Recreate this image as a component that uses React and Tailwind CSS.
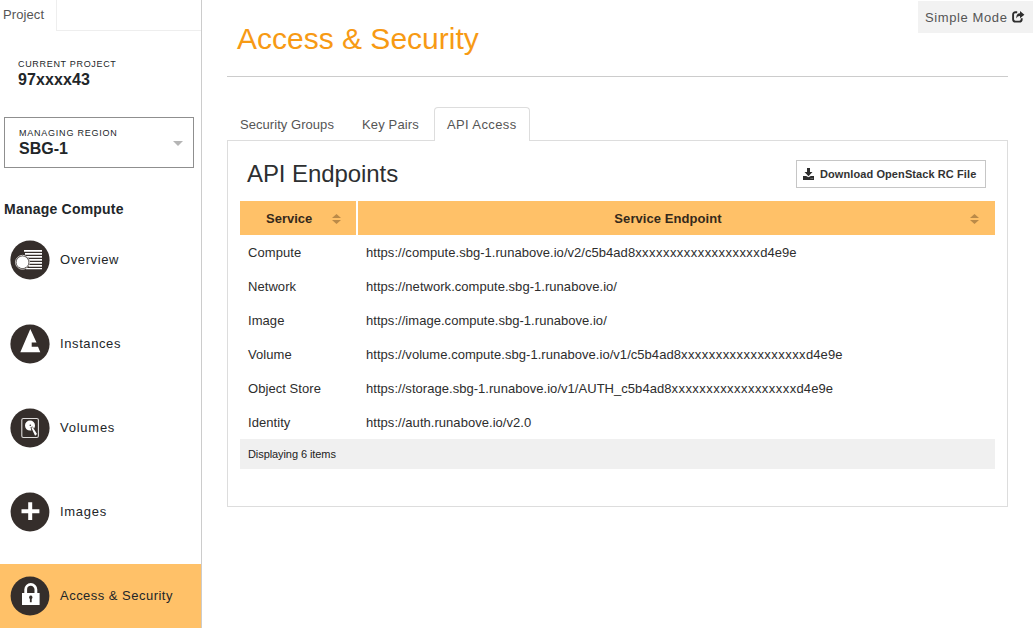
import React from "react";

const OverviewIcon = () => (
  <svg width="40" height="40" viewBox="0 0 40 40">
    <circle cx="20" cy="20" r="19.6" fill="#352e2b" />
    <g fill="#fff">
      <path d="M14 10h18v1.700H14ZM15 13h17v1.700H15ZM16 16h16v1.700H16ZM18 19h14v1.700H18ZM19 22h13v1.700H19ZM19 25h13v1.700H19ZM16 28h16v1.300H16Z" />
    </g>
    <circle cx="12.500" cy="22.300" r="7" fill="#352e2b" stroke="#c9c6c4" strokeWidth="1" />
    <circle cx="12.500" cy="22.300" r="6" fill="#fff" />
  </svg>
);

const InstancesIcon = () => (
  <svg width="40" height="40" viewBox="0 0 40 40">
    <circle cx="20" cy="20" r="19.6" fill="#352e2b" />
    <path d="M20.3 5L26.500 18.500H21.700V22.700H28L30.3 28.3H10.3Z" fill="#fff" />
  </svg>
);

const VolumesIcon = () => (
  <svg width="40" height="40" viewBox="0 0 40 40">
    <circle cx="20" cy="20" r="19.6" fill="#352e2b" />
    <rect x="11.8" y="10.5" width="16.6" height="19" rx="1.6" fill="none" stroke="#dedcdb" strokeWidth="1.1" />
    <path d="M20 12.600a5 5 0 0 1 5 5q0 1.600-.9 2.800l-1.700-1.900-1.900.7.900 3.300-1.400.1a5 5 0 0 1 0-10Z" fill="#fff" />
    <path d="M21.200 19.500l1.600-.3 4.200 6.700-1.900 1.900Z" fill="#fff" />
    <circle cx="20.300" cy="17.300" r="0.800" fill="#352e2b" />
  </svg>
);

const ImagesIcon = () => (
  <svg width="40" height="40" viewBox="0 0 40 40">
    <circle cx="20" cy="20" r="19.4" fill="#352e2b" />
    <path d="M18.2 10.3h4v7h7.2v4h-7.2V28h-4v-6.7h-6.7v-4h6.7Z" fill="#fff" />
  </svg>
);

const LockIcon = () => (
  <svg width="40" height="40" viewBox="0 0 40 40">
    <circle cx="20" cy="20" r="19.4" fill="#352e2b" />
    <path d="M15.700 18v-4.500a5.100 5.100 0 0 1 10.200 0v4.500" fill="none" stroke="#fff" strokeWidth="2.800" />
    <rect x="12" y="17" width="17.600" height="12" fill="#fff" />
    <path d="M20.800 19.600a1.800 1.800 0 0 1 .9 3.300v3.400h-1.800V22.900a1.800 1.800 0 0 1 .9-3.300Z" fill="#352e2b" />
  </svg>
);

const ShareIcon = () => (
  <svg width="13" height="12" viewBox="0 0 13 12">
    <path d="M5.200 1.300H3.500Q1.100 1.300 1.100 3.700V8.200Q1.100 10.600 3.500 10.600H7.300Q9.700 10.600 9.700 8.200V7.300" fill="none" stroke="#2d2d2d" strokeWidth="1.9" />
    <path d="M8 0L12.400 3.700L8 7.300V5.100Q5.400 5 4.300 7.400Q3.900 2.500 8 2.300Z" fill="#2d2d2d" />
  </svg>
);

const DownloadIcon = () => (
  <svg width="11" height="12" viewBox="0 0 11 12">
    <path d="M4 0h3v4h2.500L5.500 8.300 1.500 4H4Z" fill="#2d2d2d" />
    <path d="M0 8h3.200l2.300 1.200L7.800 8H11v4H0Z" fill="#2d2d2d" />
    <path d="M7.600 10.400h1M9.300 10.400h.8" stroke="#aaa" strokeWidth="0.8" />
  </svg>
);

const SortIcon = () => (
  <svg className="mt-0.5" width="9" height="10" viewBox="0 0 9 10">
    <path d="M0 4L4.500 0L9 4ZM0 6H9L4.500 10Z" fill="#bb8a48" />
  </svg>
);

const navItems = [
  { label: "Overview", Icon: OverviewIcon, tracking: "tracking-[0.6px]" },
  { label: "Instances", Icon: InstancesIcon, tracking: "tracking-[0.6px]" },
  { label: "Volumes", Icon: VolumesIcon, tracking: "tracking-[0.75px]" },
  { label: "Images", Icon: ImagesIcon, tracking: "tracking-[0.7px]" },
  { label: "Access & Security", Icon: LockIcon, tracking: "tracking-[0.48px]", active: true },
];

const mask = <span className="tracking-[0.45px]">xxxxxxxxxxxxxxxxxx</span>;

const rows = [
  ["Compute", <>https://compute.sbg-1.runabove.io/v2/c5b4ad8{mask}d4e9e</>],
  ["Network", "https://network.compute.sbg-1.runabove.io/"],
  ["Image", "https://image.compute.sbg-1.runabove.io/"],
  ["Volume", <>https://volume.compute.sbg-1.runabove.io/v1/c5b4ad8{mask}d4e9e</>],
  ["Object Store", <>https://storage.sbg-1.runabove.io/v1/AUTH_c5b4ad8{mask}d4e9e</>],
  ["Identity", "https://auth.runabove.io/v2.0"],
];

function Sidebar() {
  return (
    <aside className="flex h-[628px] w-[202px] shrink-0 flex-col border-r border-[#cccccc]">
      <div className="flex h-[31px]">
        <div className="w-[56px] pl-[3px] pt-[5px] leading-5 text-[#555] tracking-[0.1px]">Project</div>
        <div className="flex-1 border-b border-l border-[#eeeeee]" />
      </div>
      <div className="mt-[27px] pl-[18px]">
        <div className="text-[9px] leading-3 tracking-[0.68px]">CURRENT PROJECT</div>
        <div className="text-base font-bold leading-5 tracking-[0.1px]">97xxxx43</div>
      </div>
      <div className="ml-1 mt-[27px] flex h-[51px] w-[190px] items-center justify-between border border-[#8f8f8f] pl-[14px] pr-[10px]">
        <div className="pt-px">
          <div className="text-[9px] leading-3 tracking-[0.77px]">MANAGING REGION</div>
          <div className="text-base font-bold leading-5">SBG-1</div>
        </div>
        <svg className="mt-0.5" width="10" height="5" viewBox="0 0 10 5">
          <path d="M0 0H10L5 5Z" fill="#b5b5b5" />
        </svg>
      </div>
      <div className="mt-[31px] pl-1 text-sm font-bold leading-5 tracking-[0.22px]">Manage Compute</div>
      <nav className="mt-[9px] flex flex-col gap-5">
        {navItems.map(({ label, Icon, tracking, active }) => (
          <div key={label} className={`flex h-16 shrink-0 items-center gap-[10px] pl-[10px] ${active ? "bg-[#ffc168]" : ""}`}>
            <Icon />
            <span className={tracking}>{label}</span>
          </div>
        ))}
      </nav>
    </aside>
  );
}

function Tabs() {
  return (
    <div className="flex h-[33px] items-stretch text-[#555] leading-5">
      <div className="w-[122px] pl-[13px] pt-2 tracking-[0.05px]">Security Groups</div>
      <div className="w-[85px] pl-[13px] pt-2 tracking-[0.15px]">Key Pairs</div>
      <div className="z-10 -mb-px w-[96px] rounded-t border border-b-0 border-[#dddddd] bg-white pl-3 pt-[7px] tracking-[0.38px]">
        API Access
      </div>
    </div>
  );
}

export default function App() {
  return (
    <div className="flex h-[628px] w-[1033px] overflow-hidden bg-white font-['Liberation_Sans',Arial,sans-serif] text-[13px] text-[#222629]">
      <Sidebar />
      <main className="flex flex-1 flex-col pl-[25px]">
        <div className="mr-[25px] flex h-[77px] justify-between border-b border-[#cccccc]">
          <h1 className="pl-[10px] pt-[21px] text-[30px] leading-9 text-[#f79a14]">Access &amp; Security</h1>
          <div className="-mr-[25px] mt-px flex h-8 w-[115px] items-center gap-[5px] bg-[#f2f2f2] pl-[7px] text-[#555]">
            <span className="whitespace-nowrap pt-px tracking-[0.6px]">Simple Mode</span>
            <ShareIcon />
          </div>
        </div>
        <div className="mr-[25px] mt-[30px]">
          <Tabs />
          <section className="h-[367px] border border-[#dddddd] pl-3 pr-3 pt-[19px]">
            <div className="flex h-[41px] items-start justify-between pl-[7px] pr-[9px]">
              <h2 className="-mt-1 text-2xl leading-9 tracking-[-0.08px] text-[#2d2f31]">API Endpoints</h2>
              <button className="flex h-7 w-[190px] items-center gap-[6px] whitespace-nowrap border border-[#c6c6c6] pl-[6px] text-[11px] font-bold tracking-[0.09px] text-[#333]">
                <DownloadIcon />
                Download OpenStack RC File
              </button>
            </div>
            <div className="flex h-[34px] gap-[2px] font-bold text-[#35291b]">
              <div className="flex w-[116px] items-center justify-between bg-[#ffc168] pl-[26px] pr-[15px]">
                <span className="pt-px">Service</span>
                <SortIcon />
              </div>
              <div className="flex flex-1 items-center bg-[#ffc168] pr-4">
                <span className="flex-1 pl-2 pt-px text-center tracking-[0.07px]">Service Endpoint</span>
                <SortIcon />
              </div>
            </div>
            {rows.map(([name, url]) => (
              <div key={name} className="flex h-[34px] items-center pl-2 pt-px text-[#2d2d2d]">
                <div className="w-[118px] tracking-[0.06px]">{name}</div>
                <div className="tracking-[0.04px]">{url}</div>
              </div>
            ))}
            <div className="flex h-[30px] items-center bg-[#f0f0f0] pl-2 text-[11px] tracking-[-0.08px] text-[#222]">
              Displaying 6 items
            </div>
          </section>
        </div>
      </main>
    </div>
  );
}
